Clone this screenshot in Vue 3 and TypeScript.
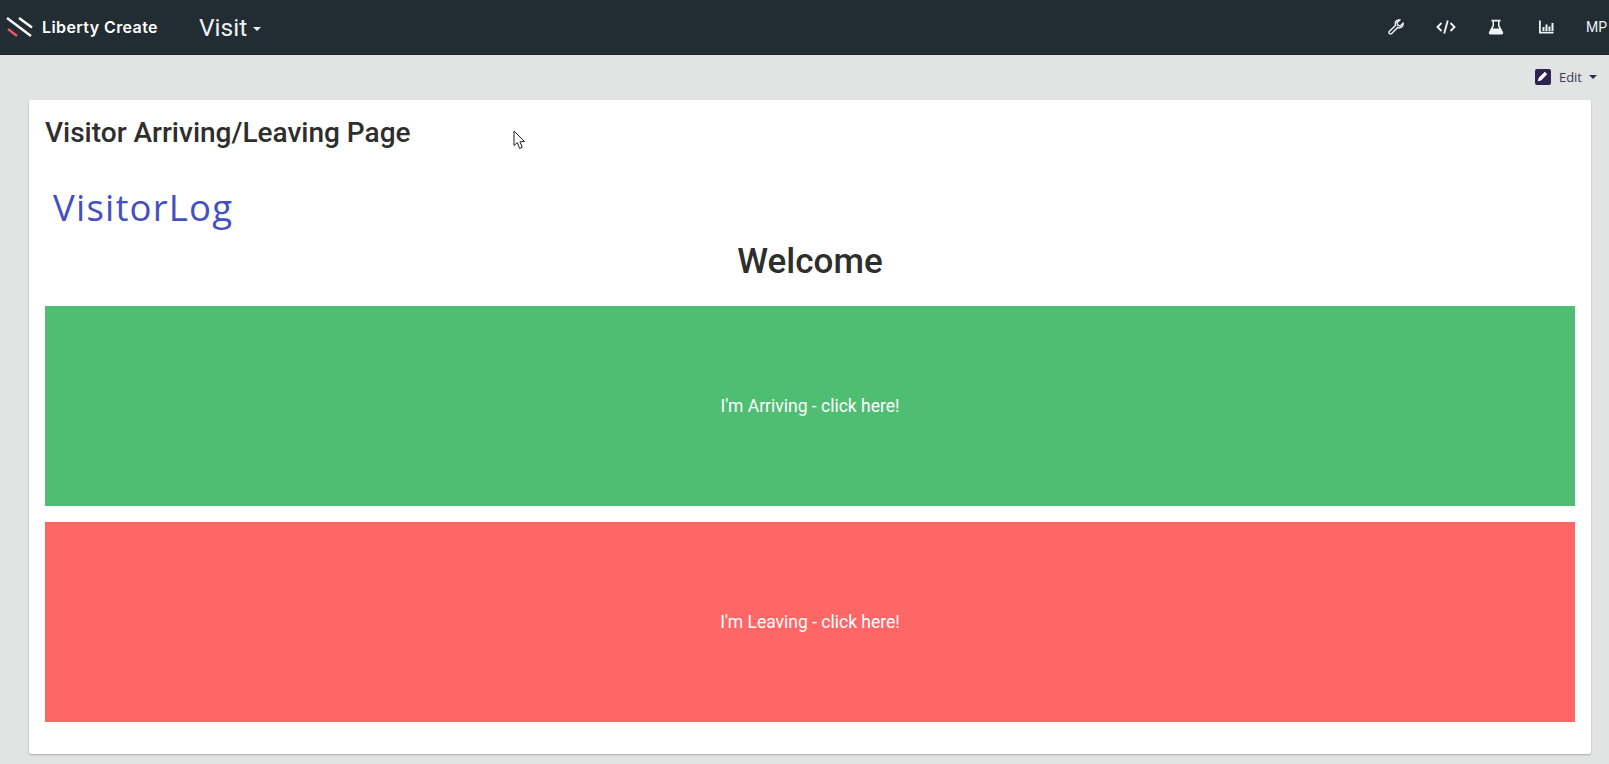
<script setup lang="ts">
const title: string = 'Visitor Arriving/Leaving Page'
</script>

<template>
  <div class="page">
    <header class="topbar">
      <div class="brand">
        <svg class="logo" width="28" height="22" viewBox="0 0 28 22">
          <path d="M1 2 L25 20" stroke="#fff" stroke-width="2.400" />
          <path d="M13 2 L26 11.500" stroke="#fff" stroke-width="2.400" />
          <path d="M2 13 L11 20" stroke="#e9595f" stroke-width="2.400" />
        </svg>
        <span class="brand-name">Liberty Create</span>
      </div>
      <div class="menu">Visit<span class="caret caret-light"></span></div>
      <nav class="tools">
        <span class="slot">
          <svg width="16" height="16" viewBox="0 0 16 16" fill="none" stroke="#eef2f4" stroke-width="1.400">
            <path d="M15 4.200 L12.200 7 L9.800 6.200 L9 3.800 L11.800 1 C9.500 .4 7.200 2 7.200 4.500 C7.200 5.200 7.300 5.800 7.600 6.300 L1.500 12.300 C.7 13.100 .8 14 1.400 14.600 C2 15.200 3 15.300 3.700 14.500 L9.700 8.400 C10.200 8.700 10.800 8.800 11.500 8.800 C14 8.800 15.500 6.500 15 4.200 Z" />
          </svg>
        </span>
        <span class="slot">
          <svg width="20" height="16" viewBox="0 0 20 16" fill="none" stroke="#eef2f4" stroke-width="1.900">
            <path d="M5.500 4 L1.500 8 L5.500 12" />
            <path d="M14.500 4 L18.500 8 L14.500 12" />
            <path d="M11.800 1.500 L8.200 14.500" />
          </svg>
        </span>
        <span class="slot">
          <svg width="16" height="16" viewBox="0 0 16 16">
            <path d="M3.500 .8 H12.500 V2.400 H11.500 V6.500 L15 13 C15.600 14.300 14.900 15.500 13.500 15.500 H2.500 C1.100 15.500 .4 14.300 1 13 L4.500 6.500 V2.400 H3.500 Z M6 2.400 V7 L4.800 9.500 H11.200 L10 7 V2.400 Z" fill="#eef2f4" fill-rule="evenodd" />
          </svg>
        </span>
        <span class="slot">
          <svg width="16" height="16" viewBox="0 0 16 16" fill="#eef2f4">
            <path d="M1 1.500 H2.800 V12.800 H15.500 V14.500 H1 Z" />
            <rect x="4.500" y="8" width="2" height="4" />
            <rect x="7.500" y="5.500" width="2" height="6.500" />
            <rect x="10.500" y="7.500" width="2" height="4.500" />
            <rect x="13.500" y="4" width="2" height="8" />
          </svg>
        </span>
        <span class="initials">MP</span>
      </nav>
    </header>

    <div class="edit-row">
      <button class="edit" type="button">
        <span class="edit-icon">
          <svg width="11" height="11" viewBox="0 0 11 11"><path d="M7.800 .8 L10.200 3.200 L4 9.400 L.8 10.200 L1.600 7 Z" fill="#fff" /></svg>
        </span>
        <span>Edit</span>
        <span class="caret caret-dark"></span>
      </button>
    </div>

    <main class="card">
      <h1 class="title">{{ title }}</h1>
      <div class="wordmark">VisitorLog</div>
      <h2 class="welcome">Welcome</h2>
      <button class="action arriving" type="button">I'm Arriving - click here!</button>
      <button class="action leaving" type="button">I'm Leaving - click here!</button>
    </main>

    <svg class="pointer" width="14" height="21" viewBox="0 0 14 21">
      <path d="M1 1 V15.500 L4.300 12.600 L6.600 18.500 L9.300 17.300 L6.900 11.800 L11.500 11.500 Z" fill="#fff" stroke="#222" stroke-width="1" />
    </svg>
  </div>
</template>

<style>
html, body { margin: 0; background: #e2e4e4; }
</style>

<style scoped>
.page {
  position: relative;
  height: 764px;
  overflow: hidden;
  background: #e2e4e4;
  font-family: Roboto, "Liberation Sans", sans-serif;
  color: #2e2e2c;
}
.topbar {
  display: flex;
  align-items: center;
  height: 54px;
  border-bottom: 1px solid #1a2329;
  background: #222c33;
  color: #eef2f4;
}
.brand {
  display: flex;
  align-items: center;
  width: 199px;
  padding-left: 6px;
  box-sizing: border-box;
}
.logo { margin-right: 8px; }
.brand-name {
  font-family: Inter, Roboto, sans-serif;
  font-size: 16px;
  font-weight: 600;
  letter-spacing: .4px;
  color: #fff;
  white-space: nowrap;
}
.menu {
  display: flex;
  align-items: center;
  font-size: 24.500px;
  font-weight: 400;
}
.caret {
  display: inline-block;
  width: 0;
  height: 0;
  border-left: 4px solid transparent;
  border-right: 4px solid transparent;
}
.caret-light { margin: 4px 0 0 6px; border-top: 4px solid #eef2f4; }
.caret-dark { margin-left: 7px; border-top: 4px solid #2d2a4a; }
.tools {
  display: flex;
  align-items: center;
  margin-left: auto;
}
.slot {
  display: flex;
  justify-content: center;
  width: 50px;
}
.initials {
  width: 23px;
  margin-left: 15px;
  overflow: hidden;
  font-size: 14px;
  white-space: nowrap;
}
.edit-row {
  display: flex;
  justify-content: flex-end;
  align-items: center;
  height: 43px;
  padding: 0 12px 2px 0;
}
.edit {
  display: flex;
  align-items: center;
  padding: 0;
  border: 0;
  background: none;
  font: 400 13px "Open Sans", sans-serif;
  color: #3b3b55;
}
.edit-icon {
  display: flex;
  align-items: center;
  justify-content: center;
  width: 16px;
  height: 16px;
  margin-right: 8px;
  border-radius: 2px;
  background: #2d2350;
}
.card {
  display: flex;
  flex-direction: column;
  width: 1562px;
  height: 654px;
  margin-left: 29px;
  padding: 0 16px;
  box-sizing: border-box;
  border-radius: 2px;
  background: #fff;
  box-shadow: 0 1px 2px rgba(0, 0, 0, .25);
}
.title {
  margin: 18px 0 0;
  font-size: 28px;
  line-height: 30px;
  font-weight: 500;
}
.wordmark {
  margin: 37px 0 0 8px;
  font-family: "Open Sans", sans-serif;
  font-size: 36.500px;
  line-height: 44px;
  letter-spacing: 1.200px;
  color: #4450bf;
}
.welcome {
  margin: 13px 0 24px;
  font-size: 35px;
  line-height: 40px;
  font-weight: 500;
  text-align: center;
}
.action {
  flex: none;
  height: 200px;
  margin-bottom: 16px;
  padding: 0;
  border: 0;
  font: 400 17.500px Roboto, sans-serif;
  color: #fff;
}
.arriving { background: #4fbe73; }
.leaving { background: #ff6666; }
.pointer { position: absolute; left: 513px; top: 130px; }
</style>
